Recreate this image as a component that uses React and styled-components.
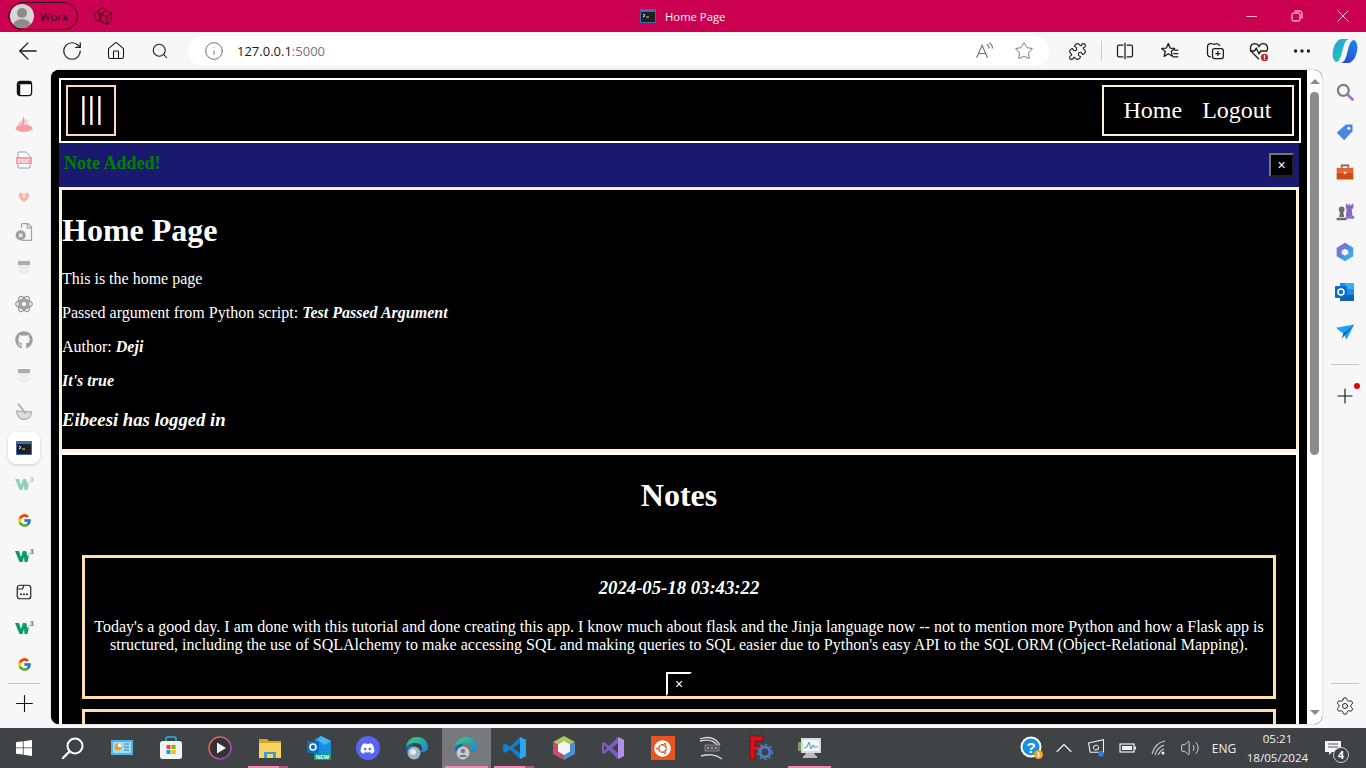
import React from 'react';
import styled, { createGlobalStyle } from 'styled-components';
import {
  ArrowLeft, RotateCw, House, Search, Info, Star, Puzzle, MoreHorizontal, Plus, Settings,
  ChevronUp, Volume2, Minus, X,
} from 'lucide-react';
import { FaGithub, FaDiscord, FaUbuntu } from 'react-icons/fa';
import { FcGoogle } from 'react-icons/fc';

const Global = createGlobalStyle`
  html, body { margin: 0; padding: 0; overflow: hidden; background: #f7f7f7; }
  * { box-sizing: border-box; }
`;

const UI = `"Open Sans", "Noto Sans", "Liberation Sans", sans-serif`;

const Shell = styled.div`
  width: 1366px; height: 768px; display: flex; flex-direction: column; overflow: hidden;
  font-family: ${UI};
`;

/* ---- title bar ---- */
const TitleBar = styled.header`
  height: 32px; flex: none; background: #cc0050; display: flex; align-items: center;
  padding-left: 8px; position: relative; color: #fff;
`;
const ProfilePill = styled.div`
  width: 70px; height: 28px; border: 1px solid #2c0a18; border-radius: 14px; display: flex;
  align-items: center; gap: 6px; padding-left: 1px; color: #2a0512; font-size: 11.5px;
`;
const Avatar = styled.span`
  width: 24px; height: 24px; border-radius: 50%; background: #d8d6d2; overflow: hidden; display: flex;
`;
const Workspace = styled.span`
  display: flex; margin-left: 16px; color: #2a0512;
`;
const WindowTitle = styled.div`
  position: absolute; left: 640px; top: 0; height: 32px; display: flex; align-items: center; gap: 9px;
  font-size: 11.3px; color: #fff;
`;
const WindowControls = styled.div`
  margin-left: auto; display: flex; height: 32px;
`;
const WindowButton = styled.span`
  width: 46px; display: flex; align-items: center; justify-content: center; color: #fff;
`;

/* ---- browser toolbar ---- */
const Toolbar = styled.div`
  height: 38px; flex: none; background: #f7f7f7; display: flex; align-items: center; padding-left: 6px;
  color: #1b1b1b;
`;
const ToolButton = styled.span`
  width: ${p => p.$w || 44}px; height: 30px; flex: none; display: flex; align-items: center;
  justify-content: center; position: relative; color: ${p => p.$muted ? '#777' : 'inherit'};
`;
const AddressBar = styled.div`
  width: 861px; height: 30px; flex: none; background: #fff; border-radius: 15px; margin: 0 6px;
  display: flex; align-items: center; padding-left: 16px; font-size: 13px; color: #1b1b1b;
`;
const Url = styled.span`
  margin-left: 13px; flex: 1;
  span { color: #72767a; }
`;
const ToolSep = styled.span`
  width: 1px; height: 20px; background: #c9c9c9; margin: 0 1px 0 2px; flex: none;
`;

/* ---- middle ---- */
const Middle = styled.div`
  flex: 1; min-height: 0; display: flex; background: #f7f7f7;
`;
const LeftRail = styled.aside`
  width: 51px; flex: none; display: flex; flex-direction: column; align-items: center;
  padding-right: 3px;
`;
const LeftSlot = styled.div`
  width: 100%; height: 36px; flex: none; display: flex; align-items: center; justify-content: center;
  opacity: ${p => p.$dim ? 0.42 : 1}; position: relative;
`;
const ActiveCard = styled.span`
  width: 32px; height: 32px; background: #fff; border-radius: 8px; display: flex; align-items: center;
  justify-content: center; box-shadow: 0 1px 3px rgba(0,0,0,.18);
`;
const RailSep = styled.div`
  width: ${p => p.$w || 32}px; height: 1px; background: #c6c6c6; flex: none;
  margin: ${p => p.$m || '1px 0 0'};
`;
const PlusSlot = styled.div`
  height: 38px; flex: none; display: flex; align-items: center; justify-content: center; margin-top: 0;
`;
const Frame = styled.main`
  width: 1271px; flex: none; margin-bottom: 4px; border-radius: 8px; overflow: hidden; display: flex;
  box-shadow: 0 0 2px rgba(0,0,0,.25); background: #000;
`;
const Page = styled.div`
  width: 1256px; flex: none; background: #000; padding: 8px; overflow: hidden; color: #fff;
  font-family: "Liberation Serif", "Times New Roman", serif; font-size: 16px;
`;
const Scrollbar = styled.div`
  width: 15px; flex: none; background: #fff; display: flex; flex-direction: column; align-items: center;
  padding: 9px 0 9px;
`;
const ArrowUp = styled.span`
  width: 0; height: 0; border-left: 5px solid transparent; border-right: 5px solid transparent;
  border-bottom: 5px solid #8a8a8a; flex: none;
`;
const ArrowDown = styled(ArrowUp)`
  border-bottom: 0; border-top: 5px solid #8a8a8a; margin-top: auto;
`;
const Thumb = styled.span`
  width: 9px; height: 363px; background: #8b8b8b; border-radius: 5px; margin-top: 8px; flex: none;
`;
const RightRail = styled.aside`
  flex: 1; display: flex; flex-direction: column; align-items: center; padding: 2px 0; margin-left: 1px;
`;
const RightSlot = styled.div`
  height: 40px; width: 100%; flex: none; display: flex; align-items: center; justify-content: center;
  position: relative;
`;
const RedDot = styled.span`
  position: absolute; left: 31px; top: 7px; width: 6px; height: 6px; border-radius: 50%; background: #e60012;
`;

/* ---- the flask page ---- */
const Nav = styled.nav`
  width: 1242px; height: 65px; border: 2px solid #fff; padding: 5px; display: flex;
  justify-content: space-between;
`;
const Burger = styled.div`
  width: 50px; border: 2px solid #ffdab9; display: flex; align-items: center; justify-content: center; gap: 5px;
`;
const BurgerBar = styled.span`
  width: 3px; height: 29px; background: linear-gradient(90deg, #a9d4f0 0 33%, #fff 33% 66%, #c9824f 66%);
`;
const NavLinks = styled.div`
  width: 192px; border: 2px solid #ffefd5; display: flex; align-items: center; justify-content: center; gap: 20px;
  font-size: 24px; padding-right: 1px;
`;
const NavLink = styled.a`
  color: #fff; text-decoration: none;
`;
const Alert = styled.div`
  width: 1240px; height: 44px; background: #191970; display: flex; align-items: center;
  justify-content: space-between; padding: 0 5px;
`;
const AlertText = styled.strong`
  color: #008000; font-size: 18px; position: relative; top: -2px;
`;
const CloseButton = styled.button`
  width: 25px; height: 24px; padding: 0; background: #000; color: #fff; border: 2px outset #767676;
  font-family: "Liberation Sans", sans-serif; font-size: 14px; line-height: 1;
`;
const HomeSection = styled.section`
  width: 1240px; border: 3px solid #ffefd5; overflow: hidden;
  h1 { font-size: 32px; margin: 22.44px 0 20.44px; line-height: 37px; }
  p { margin: 16px 0; line-height: 18px; }
  h3 { font-size: 18.72px; font-style: italic; margin: 18.72px 0 19.72px; line-height: 21px; }
  em { font-weight: bold; }
`;
const NotesSection = styled.section`
  width: 1240px; border: 3px solid #fffafa; padding: 0 20px; text-align: center;
  h2 { font-size: 32px; margin: 21.44px 0 41.44px; line-height: 37px; }
`;
const NoteCard = styled.article`
  border: 3px solid #ffdead; margin-bottom: 10px; min-height: 144px;
`;
const NoteDate = styled.h3`
  font-size: 18.72px; font-style: italic; margin: 19px 0 20px; line-height: 21px;
`;
const NoteBody = styled.p`
  margin: 0 0 18px; line-height: 18px;
`;
const NoteDelete = styled.button`
  display: block; margin: 0 auto; width: 26px; height: 24px; padding: 0; background: #000; color: #fff;
  border-style: solid; border-width: 2px; border-color: #fff #000 #000 #fff;
  font-family: "Liberation Sans", sans-serif; font-size: 14px; line-height: 1;
`;

/* ---- task bar ---- */
const Taskbar = styled.footer`
  height: 40px; flex: none; background: #3f4346; display: flex; align-items: stretch; color: #fff;
`;
const StartButton = styled.span`
  width: 48.5px; display: flex; align-items: center; justify-content: center;
`;
const TaskItem = styled.span`
  width: 49.13px; flex: none; display: flex; align-items: center; justify-content: center; position: relative;
  background: ${p => p.$active ? '#777a7c' : 'transparent'};
  &::after {
    content: ''; position: absolute; bottom: 0; height: 2px; left: 3px; display: ${p => p.$open ? 'block' : 'none'};
    width: ${p => p.$open === 'stack' ? 31 : 43}px; background: #f286b3;
    box-shadow: ${p => p.$open === 'stack' ? '9px 0 0 #a8587c' : 'none'};
  }
`;
const Tray = styled.div`
  margin-left: auto; display: flex; align-items: stretch; padding-right: 11px;
`;
const TrayItem = styled.span`
  width: ${p => p.$w}px; display: flex; align-items: center; justify-content: center; position: relative;
  color: #f1f1f1; font-size: 12px;
`;
const Clock = styled.span`
  width: 68px; display: flex; flex-direction: column; align-items: center; justify-content: center;
  font-size: 11.6px; line-height: 19px; color: #f1f1f1; padding-left: 1px;
`;
const NotifyBadge = styled.span`
  position: absolute; left: 22px; top: 19px; width: 16px; height: 16px; border-radius: 50%;
  border: 1px solid #cfcfcf; background: #3f4346; font-size: 10.5px; font-weight: 700; line-height: 14px;
  text-align: center; color: #fff;
`;

/* ---- drawings ---- */
const Svg = ({ s = 20, vb = 24, children }) => (
  <svg width={s} height={s} viewBox={`0 0 ${vb} ${vb}`} fill="none">{children}</svg>
);

const AvatarImg = () => (
  <svg width="24" height="24" viewBox="0 0 24 24">
    <circle cx="12" cy="9" r="5" fill="#8c8c8c" /><ellipse cx="12" cy="22" rx="9" ry="7" fill="#8c8c8c" />
  </svg>
);
const WorkspaceIcon = () => (
  <Svg s={18}>
    <g stroke="currentColor" strokeWidth="1.2" strokeLinejoin="round">
      <path d="M1 8l5-4 2 14-3 1-3-3z" /><path d="M6 4l6-3 3 3" /><path d="M9 9l7-4 7 3v11l-6 4-8-4z" /><path d="M9 9l8 4v10M17 13l6-5" />
    </g>
  </Svg>
);
const TerminalIcon = ({ s = 16 }) => (
  <svg width={s} height={s} viewBox="0 0 16 16">
    <rect x="0" y="1" width="16" height="14" fill="#3d6fa8" />
    <rect x="1" y="4" width="14" height="10" fill="#1e2024" />
    <path d="M3 6l2 1.500L3 9" stroke="#fff" strokeWidth="1" fill="none" />
    <rect x="6" y="8.500" width="3" height="1" fill="#ccc" />
  </svg>
);
const RestoreIcon = () => (
  <Svg s={12} vb={12}><g stroke="#fff" strokeWidth="1"><rect x="1" y="3" width="8" height="8" rx="1.500" /><path d="M3.500 1h5.500A2 2 0 0 1 11 3v5.500" /></g></Svg>
);
const SplitIcon = () => (
  <Svg s={20}><g stroke="currentColor" strokeWidth="1.500"><path d="M10 5H5a2 2 0 0 0-2 2v10a2 2 0 0 0 2 2h5M14 5h5a2 2 0 0 1 2 2v10a2 2 0 0 1-2 2h-5M12 2v20" /></g></Svg>
);
const FavIcon = () => (
  <Svg s={20}><g stroke="currentColor" strokeWidth="1.500" strokeLinejoin="round"><path d="M10 3l2.200 5.500 5.300.4-4 3.600 1.300 5.700L10 15.200 5 18.500l1.400-5.900L2 8.900l5.600-.4L10 3z" /><path d="M17 11h5M16 15h6M15 19h7" /></g></Svg>
);
const CollectionsIcon = () => (
  <Svg s={20}><g stroke="currentColor" strokeWidth="1.500"><path d="M7 19c-3 0-4-2-4-4V7c0-3 2-4 4-4l4 1 3-1c2 0 3 1 4 3" /><rect x="9" y="9" width="13" height="12" rx="2.500" fill="#f7f7f7" /><path d="M15.500 12v6M12.500 15h6" /></g></Svg>
);
const HealthIcon = () => (
  <svg width="22" height="22" viewBox="0 0 24 24" fill="none">
    <path d="M12 21L4 13C1 9 3 4 7.500 4c2 0 3.500 1 4.500 3 1-2 2.500-3 4.500-3C21 4 23 9 20 13" stroke="#1b1b1b" strokeWidth="1.500" />
    <path d="M2 12h5l2-3 3 6 2-3h6" stroke="#1b1b1b" strokeWidth="1.500" />
    <circle cx="18" cy="19" r="4" fill="#c62828" /><rect x="17.300" y="16.500" width="1.400" height="3" fill="#fff" /><rect x="17.300" y="20.200" width="1.400" height="1.200" fill="#fff" />
  </svg>
);
const ReadAloud = () => (
  <Svg s={20}><g stroke="#777" strokeWidth="1.400"><path d="M2 20L8.500 5 15 20M4.500 15h8" /><path d="M14 4c2 1 3 2.500 3 5M17 2c2.500 1.500 4 4 4 7" /></g></Svg>
);
const CopilotIcon = () => (
  <svg width="26" height="26" viewBox="0 0 26 26">
    <defs>
      <linearGradient id="cpa" x1="0" y1="0" x2="1" y2="1"><stop offset="0" stopColor="#1f9fe0" /><stop offset="1" stopColor="#2ad3a0" /></linearGradient>
      <linearGradient id="cpb" x1="1" y1="0" x2="0" y2="1"><stop offset="0" stopColor="#1b8cf0" /><stop offset="1" stopColor="#2b3fd0" /></linearGradient>
    </defs>
    <path d="M9 1h8c-3 1-4 3-5 6l-3 11c-1 3-3 6-5 6C1 22 0 18 1 13 2 7 5 2 9 1z" fill="url(#cpa)" />
    <path d="M17 25H9c3-1 4-3 5-6l3-11c1-3 3-6 5-6 3 2 4 6 3 11-1 6-4 11-8 12z" fill="url(#cpb)" />
  </svg>
);
const TabsIcon = () => (
  <Svg s={18}><g stroke="#222" strokeWidth="1.600"><rect x="3" y="3" width="18" height="18" rx="3.500" /><path d="M3 8h7l2-5" /></g><g fill="#222"><circle cx="8" cy="15" r="1.300" /><circle cx="12" cy="15" r="1.300" /><circle cx="16" cy="15" r="1.300" /></g></Svg>
);
const TabStrip = () => (
  <Svg s={17}><rect x="2" y="2" width="20" height="20" rx="4" fill="#fff" stroke="#111" strokeWidth="1.800" /><path d="M2 6h20a4 4 0 0 0-4-4H6a4 4 0 0 0-4 4z" fill="#111" /><path d="M2 6h4v16a4 4 0 0 1-4-4z" fill="#111" /></Svg>
);
const Flame = () => (
  <Svg s={20}><g fill="#f4242c"><ellipse cx="12" cy="17" rx="10" ry="4.500" /><path d="M11 3c2 3 3 5 1 9 0 0-2 2-3 4-2-4 2-8 2-13zM15 6c2 3 1 6-2 9 0-2 3-5 2-9zM8 8c0 3-1 5-1 7-2-2-1-5 1-7z" /></g></Svg>
);
const PdfFile = () => (
  <svg width="18" height="18" viewBox="0 0 18 18">
    <path d="M3 1h8l4 4v12H3z" fill="#fff" stroke="#333" strokeWidth="1" />
    <rect x="1" y="6" width="16" height="7" fill="#ef2b2d" />
    <text x="9" y="11.800" fontSize="6" fontWeight="700" fill="#fff" textAnchor="middle" fontFamily="Liberation Sans">PDF</text>
  </svg>
);
const Bloom = () => (
  <Svg s={16}><path d="M12 21C4 16 3 11 5 8c2-2 5-1 7 2 2-3 5-4 7-2 2 3 1 8-7 13z" fill="#f4563f" /><circle cx="12" cy="12" r="3" fill="#f6b73c" /></Svg>
);
const FileX = () => (
  <Svg s={20}><path d="M9 2h8l4 4v16H9" stroke="#333" strokeWidth="1.500" /><path d="M9 2v5M16 2v5h5" stroke="#333" strokeWidth="1.500" /><circle cx="8" cy="16" r="6" fill="#222" /><path d="M6 14l4 4M10 14l-4 4" stroke="#fff" strokeWidth="1.500" /></Svg>
);
const PaleBox = () => (
  <svg width="14" height="16" viewBox="0 0 14 16">
    <path d="M1 1h12v3l-1 8-5 3-5-3-1-8z" fill="#d9d9d9" /><rect x="1" y="1" width="12" height="4" fill="#44444f" /><path d="M1 8l6 3 6-3" stroke="#fff" strokeWidth="1" fill="none" />
  </svg>
);
const Knot = () => (
  <Svg s={20}><g stroke="#111" strokeWidth="1.500" fill="none"><circle cx="12" cy="12" r="3.500" /><ellipse cx="12" cy="12" rx="10" ry="5" /><ellipse cx="12" cy="12" rx="10" ry="5" transform="rotate(60 12 12)" /><ellipse cx="12" cy="12" rx="10" ry="5" transform="rotate(120 12 12)" /></g></Svg>
);
const Mortar = () => (
  <Svg s={20}><g stroke="#555" strokeWidth="1.600" fill="#bbb"><path d="M3 11l18 1c0 6-4 9-9 9-5 0-8-4-9-10z" /><path d="M5 2l9 12" strokeWidth="2.400" /></g></Svg>
);
const W3 = ({ c = '#0c9a6a' }) => (
  <svg width="20" height="16" viewBox="0 0 20 16">
    <path d="M1 3h4l2 6 2-6h3l2 6 2-6h0l-2.500 11h-3L10 9l-1.500 5h-3z" fill={c} />
    <text x="16" y="6" fontSize="6.500" fontWeight="700" fill={c} fontFamily="Liberation Sans">3</text>
  </svg>
);
const SearchPurple = () => (
  <Svg s={20}><circle cx="10" cy="10" r="6.500" stroke="#7b7b7b" strokeWidth="2.600" /><path d="M15 15l6 6" stroke="#9f6fd8" strokeWidth="3.200" strokeLinecap="round" /></Svg>
);
const TagBlue = () => (
  <Svg s={20}><path d="M2 13L13 3h8v8L11 22z" fill="#4a86e0" /><circle cx="16.500" cy="7.500" r="1.800" fill="#fff" /></Svg>
);
const Toolbox = () => (
  <Svg s={20}><path d="M8 7V4h8v3" stroke="#6b6b6b" strokeWidth="2" /><rect x="2" y="7" width="20" height="6" fill="#e8622a" /><rect x="2" y="13" width="20" height="8" fill="#d04a18" /><rect x="10.500" y="11.500" width="3" height="3" fill="#ddd" /></Svg>
);
const Chess = () => (
  <Svg s={20}><g fill="#6d6d6d"><circle cx="8" cy="9" r="3.500" /><path d="M6 12h4l1 6H5zM2 19h12v3H2z" /></g><g fill="#8a66c9"><path d="M13 2h2v2h2V2h1v2h2V2h2v6h-2l1 9h-8l1-9h-1z" /><rect x="13" y="17" width="10" height="3" /></g></Svg>
);
const M365 = () => (
  <svg width="20" height="20" viewBox="0 0 24 24">
    <defs><linearGradient id="m3" x1="0" y1="0" x2="1" y2="1"><stop offset="0" stopColor="#b04fd6" /><stop offset=".5" stopColor="#4f8fe8" /><stop offset="1" stopColor="#35c3d6" /></linearGradient></defs>
    <path d="M12 1l10 6v10l-10 6-10-6V7z" fill="url(#m3)" /><path d="M12 8l4 2.500v3.500l-4 2.500-4-2.500v-3.500z" fill="#f7f7f7" />
  </svg>
);
const OutlookSide = () => (
  <svg width="20" height="20" viewBox="0 0 20 20">
    <rect x="5" y="1" width="14" height="18" fill="#1f8ee0" /><rect x="10" y="1" width="9" height="6" fill="#39b1f0" /><rect x="5" y="13" width="14" height="6" fill="#0f62b0" />
    <rect x="0" y="4" width="12" height="12" rx="1" fill="#0a6cc4" /><circle cx="6" cy="10" r="3" fill="none" stroke="#fff" strokeWidth="1.600" />
  </svg>
);
const SendBlue = () => (
  <Svg s={20}><path d="M1 7l22-4-9 18-4-7z" fill="#1da1f2" /><path d="M10 14L23 3 8 20z" fill="#0b5fa8" /></Svg>
);
const WinLogo = () => (
  <svg width="16" height="16" viewBox="0 0 16 16" fill="#fff">
    <path d="M0 2.300l6.800-1v6.200H0zM7.600 1.200L16 0v7.500H7.600zM0 8.300h6.800v6.300L0 13.700zM7.600 8.300H16V16l-8.400-1.200z" />
  </svg>
);
const TaskSearch = () => (
  <Svg s={24}><circle cx="14" cy="10" r="7.500" stroke="#fff" strokeWidth="2" /><path d="M8.500 15.500L2 22" stroke="#fff" strokeWidth="2.400" strokeLinecap="round" /></Svg>
);
const ControlPanel = () => (
  <svg width="22" height="16" viewBox="0 0 22 16">
    <rect width="22" height="15" fill="#55b2e6" /><rect x="2" y="2" width="18" height="11" fill="#a4dcf6" />
    <circle cx="7" cy="7" r="3.500" fill="#f39b1f" /><path d="M7 7V3.500A3.500 3.500 0 0 1 10.500 7z" fill="#fff" />
    <path d="M13 4h5M13 7h5M13 10h5" stroke="#2a7fc0" strokeWidth="1.200" />
  </svg>
);
const Store = () => (
  <svg width="24" height="24" viewBox="0 0 24 24">
    <path d="M7 6V3a2 2 0 0 1 2-2h6a2 2 0 0 1 2 2v3" stroke="#27b4e8" strokeWidth="1.600" fill="none" />
    <rect x="1" y="5" width="22" height="18" rx="2.500" fill="#f1f1f1" />
    <rect x="7.500" y="9" width="4" height="4" fill="#e8492c" /><rect x="12.500" y="9" width="4" height="4" fill="#7fba00" />
    <rect x="7.500" y="14" width="4" height="4" fill="#00a4ef" /><rect x="12.500" y="14" width="4" height="4" fill="#ffb900" />
  </svg>
);
const MediaPlayer = () => (
  <svg width="24" height="24" viewBox="0 0 24 24">
    <defs><linearGradient id="mp" x1="0" y1="0" x2="1" y2="1"><stop offset="0" stopColor="#f06a2a" /><stop offset=".6" stopColor="#c24a9a" /><stop offset="1" stopColor="#6a48c8" /></linearGradient></defs>
    <circle cx="12" cy="12" r="11" fill="#333" stroke="url(#mp)" strokeWidth="1.600" />
    <path d="M9 6.500v11l9-5.500z" fill="#f2f2f2" />
  </svg>
);
const Folder = () => (
  <svg width="22" height="20" viewBox="0 0 22 20">
    <path d="M0 1h8l2 2h12v17H0z" fill="#d9a520" /><rect y="5" width="22" height="15" fill="#f9d45c" />
    <path d="M5 14h12v6H5z" fill="#3f9be0" /><path d="M8 16h6v4H8z" fill="#f9d45c" />
  </svg>
);
const OutlookNew = () => (
  <svg width="24" height="24" viewBox="0 0 24 24">
    <path d="M8 3l6-3 10 5v13H8z" fill="#1a8de0" /><path d="M14 0l10 5-6 4-8-5z" fill="#45b7f2" />
    <rect x="0" y="5" width="12" height="12" rx="1" fill="#0a6cc4" /><circle cx="6" cy="11" r="3" fill="none" stroke="#fff" strokeWidth="1.600" />
    <rect x="7" y="17" width="17" height="7" rx="1" fill="#0f9d78" />
    <text x="15.500" y="22.800" fontSize="5.800" fontWeight="700" fill="#fff" textAnchor="middle" fontFamily="Liberation Sans">NEW</text>
  </svg>
);
const DiscordDisc = styled.span`
  width: 24px; height: 24px; border-radius: 50%; background: #5865f2; display: flex; align-items: center;
  justify-content: center; color: #fff;
`;
const Edge = ({ id, person }) => (
  <svg width="24" height="24" viewBox="0 0 24 24">
    <defs><linearGradient id={id} x1="0" y1="0" x2="1" y2="1"><stop offset="0" stopColor="#3bd07a" /><stop offset="1" stopColor="#1683d8" /></linearGradient></defs>
    <path d="M1 11C2 4 7 1 12 1c7 0 11 5 11 10 0 4-3 5-6 5h-3c3-1 4-3 3-5-1-3-4-4-7-4-4 0-7 2-9 4z" fill={`url(#${id})`} />
    <path d="M1 11c2-2 5-3 8-3-2 2-3 5-2 8 1 4 4 6 9 6-2 1-3 1-5 1C6 23 1 18 1 11z" fill="#0f6ab8" />
    {person
      ? <g><circle cx="9" cy="17" r="6.500" fill="#c9c9c9" /><circle cx="9" cy="15" r="2.200" fill="#777" /><path d="M5 21c1-3 7-3 8 0z" fill="#777" /></g>
      : <g><circle cx="9" cy="17" r="6.500" fill="#9fb4c4" /><circle cx="8" cy="16" r="3" fill="#dfe7ec" /></g>}
  </svg>
);
const VSCode = () => (
  <svg width="24" height="24" viewBox="0 0 24 24">
    <path d="M17 1l6 3v16l-6 3-10-9.500-4.500 3.500L0 15V9l2.500-1.500L7 11z" fill="#0e82d0" />
    <path d="M17 1l6 3v16l-6 3z" fill="#2aa6f0" /><path d="M17 7v10l-7-5z" fill="#3f4346" />
  </svg>
);
const NetBeans = () => (
  <svg width="22" height="24" viewBox="0 0 22 24">
    <path d="M11 0l11 6-11 6L0 6z" fill="#a9c85a" /><path d="M0 6l11 6v12L0 18z" fill="#c94a6a" /><path d="M22 6L11 12v12l11-6z" fill="#4a8fd0" />
    <path d="M11 5l6 3.500v7L11 19l-6-3.500v-7z" fill="#f4f4f4" />
  </svg>
);
const VS = () => (
  <svg width="24" height="24" viewBox="0 0 24 24">
    <path d="M17 1l6 3v16l-6 3-9-9-5 4-2-1V7l2-1 5 4z" fill="#7d5cc0" />
    <path d="M17 1l6 3v16l-6 3z" fill="#b18ee8" /><path d="M17 7v10l-6-5z" fill="#3f4346" /><path d="M3 9v6l3-3z" fill="#3f4346" />
  </svg>
);
const UbuntuBox = styled.span`
  width: 24px; height: 24px; background: #e95420; display: flex; align-items: center; justify-content: center; color: #fff;
`;
const Wsl = () => (
  <svg width="26" height="26" viewBox="0 0 26 26" fill="none">
    <path d="M1 4c8-3 15-2 20 6M2 21c8-2 14-2 21 3M1 6c8-2 14-1 18 5" stroke="#d8d8d8" strokeWidth="1.300" />
    <rect x="6" y="10" width="14" height="6" fill="#555" stroke="#aaa" strokeWidth=".6" />
    <path d="M8 13h2M12 13h2M16 13h2" stroke="#ddd" />
  </svg>
);
const FGear = () => (
  <svg width="24" height="26" viewBox="0 0 24 26">
    <path d="M1 1h13v5H6v5h7v4H6v9H1z" fill="#d8121c" stroke="#7d0a10" strokeWidth=".8" />
    <circle cx="16" cy="17" r="5" fill="none" stroke="#4a7ec0" strokeWidth="3" />
    <circle cx="16" cy="17" r="7.500" fill="none" stroke="#4a7ec0" strokeWidth="1.500" strokeDasharray="2.500 2.500" />
  </svg>
);
const Monitor = () => (
  <svg width="24" height="24" viewBox="0 0 24 24">
    <rect x="3" y="2" width="20" height="15" fill="#d9d9d9" /><rect x="5" y="4" width="16" height="11" fill="#f2f6f8" />
    <path d="M6 12l3-1 2-5 2 7 2-4 1 2h4" stroke="#4a9ad8" fill="none" />
    <rect x="0" y="6" width="3" height="9" fill="#7d9a6a" /><path d="M8 17h8l2 3H6zM5 20h14v2H5z" fill="#bbb" />
  </svg>
);
const HelpBadge = () => (
  <svg width="24" height="24" viewBox="0 0 24 24">
    <circle cx="11" cy="11" r="10.500" fill="#fff" /><circle cx="11" cy="11" r="8.500" fill="#1a8fe0" />
    <text x="11" y="16.500" fontSize="15" fontWeight="700" fill="#fff" textAnchor="middle" fontFamily="Liberation Sans">?</text>
    <circle cx="18.500" cy="18.500" r="4.500" fill="#f2a81d" /><rect x="17.800" y="16" width="1.400" height="5" fill="#fff" />
  </svg>
);
const Projector = () => (
  <Svg s={20}><g stroke="#f1f1f1" strokeWidth="1.300"><path d="M3 6l18-4v15H5z" /><path d="M9 13c-1-3 2-5 5-4M15 10c1 3-2 5-5 4" /></g><circle cx="18" cy="19" r="3.500" fill="#2f7fd8" /></Svg>
);
const Battery = () => (
  <Svg s={18} vb={18}><rect x="1" y="5" width="14" height="8" stroke="#f1f1f1" strokeWidth="1.200" /><rect x="3" y="7" width="10" height="4" fill="#f1f1f1" /><rect x="15.500" y="7.500" width="1.500" height="3" fill="#f1f1f1" /></Svg>
);
const Wifi = () => (
  <Svg s={18} vb={18}><g stroke="#c9c9c9" strokeWidth="1.200"><path d="M1 15C3 8 8 3 14 2M4 16c1-4 4-8 9-10M7 16c1-2 3-5 6-6" /></g><circle cx="12" cy="14" r="1.500" fill="#f1f1f1" /></Svg>
);
const ToastIcon = () => (
  <svg width="18" height="18" viewBox="0 0 18 18">
    <path d="M1 2h16v11H8l-3 3v-3H1z" fill="#f4f4f4" /><path d="M4 5h10M4 8h10" stroke="#555" />
  </svg>
);

export default function App() {
  return (
    <Shell>
      <Global />
      <TitleBar>
        <ProfilePill><Avatar><AvatarImg /></Avatar>Work</ProfilePill>
        <Workspace><WorkspaceIcon /></Workspace>
        <WindowTitle><TerminalIcon />Home Page</WindowTitle>
        <WindowControls>
          <WindowButton><Minus size={17} strokeWidth={1} /></WindowButton>
          <WindowButton><RestoreIcon /></WindowButton>
          <WindowButton><X size={20} strokeWidth={1} /></WindowButton>
        </WindowControls>
      </TitleBar>

      <Toolbar>
        <ToolButton><ArrowLeft size={28} strokeWidth={1.1} /></ToolButton>
        <ToolButton><RotateCw size={22} strokeWidth={1.3} /></ToolButton>
        <ToolButton><House size={20} strokeWidth={1.3} /></ToolButton>
        <ToolButton><Search size={18} strokeWidth={1.4} /></ToolButton>
        <AddressBar>
          <Info size={20} strokeWidth={1.1} color="#666" />
          <Url>127.0.0.1<span>:5000</span></Url>
          <ToolButton $w={40} $muted><ReadAloud /></ToolButton>
          <ToolButton $w={38} $muted><Star size={20} strokeWidth={1.2} /></ToolButton>
          <ToolButton $w={6} />
        </AddressBar>
        <ToolButton><Puzzle size={19} strokeWidth={1.4} /></ToolButton>
        <ToolSep />
        <ToolButton><SplitIcon /></ToolButton>
        <ToolButton $w={46}><FavIcon /></ToolButton>
        <ToolButton><CollectionsIcon /></ToolButton>
        <ToolButton><HealthIcon /></ToolButton>
        <ToolButton $w={42}><MoreHorizontal size={22} strokeWidth={1.7} /></ToolButton>
        <ToolButton><CopilotIcon /></ToolButton>
      </Toolbar>

      <Middle>
        <LeftRail>
          <LeftSlot><TabStrip /></LeftSlot>
          <LeftSlot $dim><Flame /></LeftSlot>
          <LeftSlot $dim><PdfFile /></LeftSlot>
          <LeftSlot $dim><Bloom /></LeftSlot>
          <LeftSlot $dim><FileX /></LeftSlot>
          <LeftSlot $dim><PaleBox /></LeftSlot>
          <LeftSlot $dim><Knot /></LeftSlot>
          <LeftSlot $dim><FaGithub size={18} color="#222" /></LeftSlot>
          <LeftSlot $dim><PaleBox /></LeftSlot>
          <LeftSlot $dim><Mortar /></LeftSlot>
          <LeftSlot><ActiveCard><TerminalIcon /></ActiveCard></LeftSlot>
          <LeftSlot $dim><W3 /></LeftSlot>
          <LeftSlot><FcGoogle size={15} /></LeftSlot>
          <LeftSlot><W3 /></LeftSlot>
          <LeftSlot><TabsIcon /></LeftSlot>
          <LeftSlot><W3 /></LeftSlot>
          <LeftSlot><FcGoogle size={15} /></LeftSlot>
          <RailSep />
          <PlusSlot><Plus size={27} strokeWidth={1} color="#111" /></PlusSlot>
        </LeftRail>

        <Frame>
          <Page>
            <Nav>
              <Burger><BurgerBar /><BurgerBar /><BurgerBar /></Burger>
              <NavLinks><NavLink>Home</NavLink><NavLink>Logout</NavLink></NavLinks>
            </Nav>
            <Alert>
              <AlertText>Note Added!</AlertText>
              <CloseButton>×</CloseButton>
            </Alert>
            <HomeSection>
              <h1>Home Page</h1>
              <p>This is the home page</p>
              <p>Passed argument from Python script: <em>Test Passed Argument</em></p>
              <p>Author: <em>Deji</em></p>
              <p><em>It's true</em></p>
              <h3>Eibeesi has logged in</h3>
            </HomeSection>
            <NotesSection>
              <h2>Notes</h2>
              <NoteCard>
                <NoteDate>2024-05-18 03:43:22</NoteDate>
                <NoteBody>Today's a good day. I am done with this tutorial and done creating this app. I know much about flask and the Jinja language now -- not to mention more Python and how a Flask app is structured, including the use of SQLAlchemy to make accessing SQL and making queries to SQL easier due to Python's easy API to the SQL ORM (Object-Relational Mapping).</NoteBody>
                <NoteDelete>×</NoteDelete>
              </NoteCard>
              <NoteCard />
            </NotesSection>
          </Page>
          <Scrollbar><ArrowUp /><Thumb /><ArrowDown /></Scrollbar>
        </Frame>

        <RightRail>
          <RightSlot><SearchPurple /></RightSlot>
          <RightSlot><TagBlue /></RightSlot>
          <RightSlot><Toolbox /></RightSlot>
          <RightSlot><Chess /></RightSlot>
          <RightSlot><M365 /></RightSlot>
          <RightSlot><OutlookSide /></RightSlot>
          <RightSlot><SendBlue /></RightSlot>
          <RailSep $w={28} $m="12px 0 11px" />
          <RightSlot><Plus size={24} strokeWidth={1.1} color="#111" /><RedDot /></RightSlot>
          <RailSep $w={28} $m="auto 0 2px" />
          <RightSlot><Settings size={20} strokeWidth={1.2} color="#222" /></RightSlot>
        </RightRail>
      </Middle>

      <Taskbar>
        <StartButton><WinLogo /></StartButton>
        <TaskItem><TaskSearch /></TaskItem>
        <TaskItem><ControlPanel /></TaskItem>
        <TaskItem><Store /></TaskItem>
        <TaskItem><MediaPlayer /></TaskItem>
        <TaskItem $open="stack"><Folder /></TaskItem>
        <TaskItem><OutlookNew /></TaskItem>
        <TaskItem><DiscordDisc><FaDiscord size={15} /></DiscordDisc></TaskItem>
        <TaskItem><Edge id="edgeA" /></TaskItem>
        <TaskItem $active $open="full"><Edge id="edgeB" person /></TaskItem>
        <TaskItem $open="stack"><VSCode /></TaskItem>
        <TaskItem><NetBeans /></TaskItem>
        <TaskItem><VS /></TaskItem>
        <TaskItem><UbuntuBox><FaUbuntu size={17} /></UbuntuBox></TaskItem>
        <TaskItem><Wsl /></TaskItem>
        <TaskItem><FGear /></TaskItem>
        <TaskItem $open="full"><Monitor /></TaskItem>
        <Tray>
          <TrayItem $w={32}><HelpBadge /></TrayItem>
          <TrayItem $w={31}><ChevronUp size={28} strokeWidth={1} /></TrayItem>
          <TrayItem $w={33}><Projector /></TrayItem>
          <TrayItem $w={32}><Battery /></TrayItem>
          <TrayItem $w={31}><Wifi /></TrayItem>
          <TrayItem $w={30}><Volume2 size={20} strokeWidth={1} /></TrayItem>
          <TrayItem $w={38}>ENG</TrayItem>
          <Clock><span>05:21</span><span>18/05/2024</span></Clock>
          <TrayItem $w={44}><ToastIcon /><NotifyBadge>4</NotifyBadge></TrayItem>
        </Tray>
      </Taskbar>
    </Shell>
  );
}
